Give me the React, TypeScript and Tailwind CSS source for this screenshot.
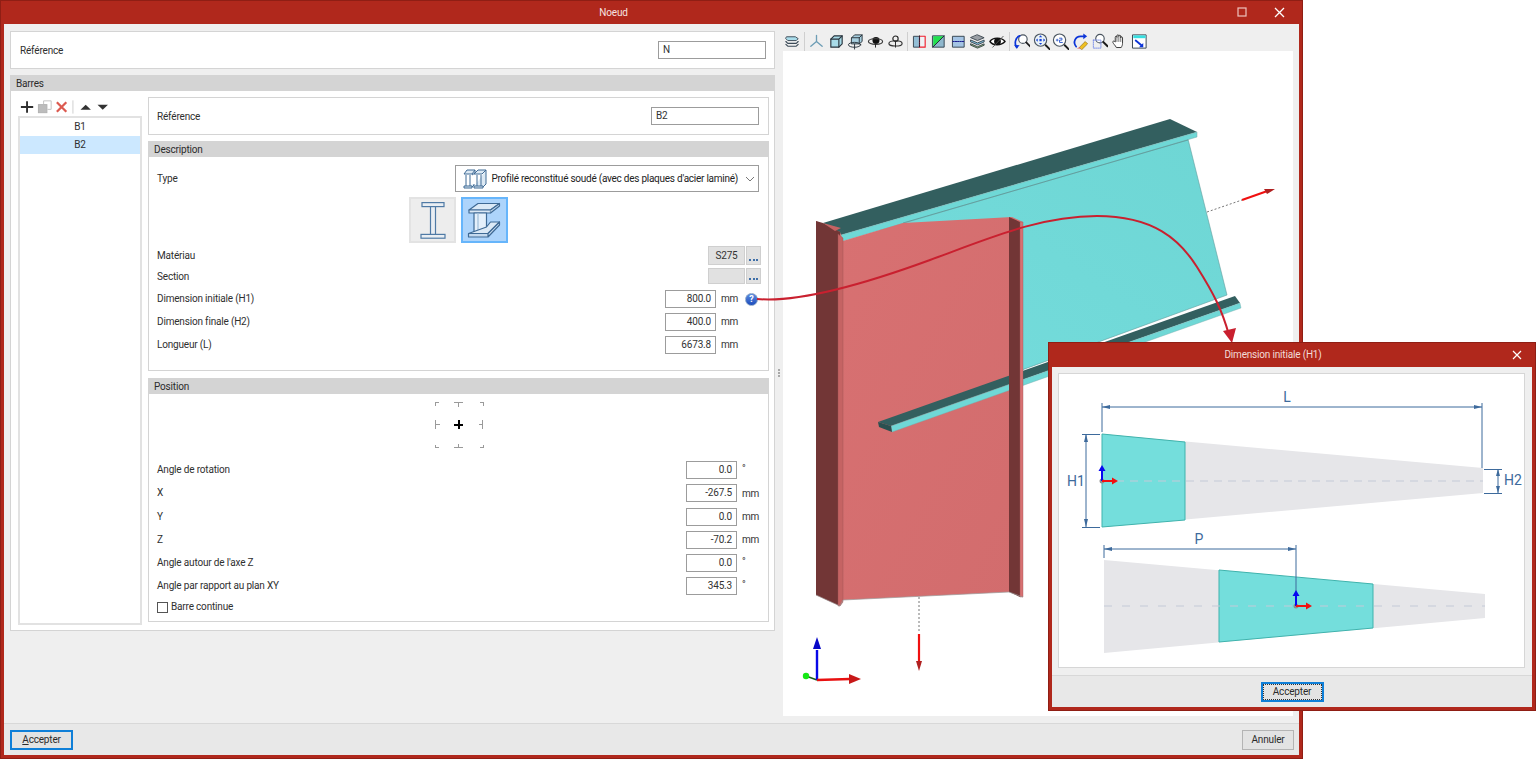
import React from "react";

const lineDark = "#3b4a57";

function Tool({ children }: { children: React.ReactNode }) {
  return (
    <div className="flex h-[18px] w-[19.6px] shrink-0 items-center justify-center">
      <svg width="17" height="17" viewBox="0 0 18 18" fill="none" strokeLinejoin="round" strokeLinecap="round">
        {children}
      </svg>
    </div>
  );
}

function Mag({ x = 7.5, y = 7.5, r = 5.5, fill = "#fff" }: { x?: number; y?: number; r?: number; fill?: string }) {
  return (
    <g>
      <circle cx={x} cy={y} r={r} fill={fill} stroke="#4a5560" strokeWidth="1.2" />
      <path d={`M${x + r - 1} ${y + r - 1}L${x + r + 3.5} ${y + r + 3.5}`} stroke="#1c1c1c" strokeWidth="2" />
    </g>
  );
}

function ViewToolbar() {
  const Sep = () => <div className="mx-[1.7px] h-[19px] w-px shrink-0 bg-[#cfcfcf]" />;
  return (
    <div className="flex h-[27px] items-center pt-[7px]">
      <Tool>
        <path d="M3 4h9l3 2-2 2H4L2 6z" fill="#a9dcea" stroke={lineDark} />
        <path d="M2 9l2 2h9l2-2M2 12l2 2h9l2-2" stroke={lineDark} strokeWidth="1.2" />
      </Tool>
      <Sep />
      <Tool>
        <path d="M9 9V2.500M9 9l-6 5M9 9l6 5" stroke="#6d9db5" strokeWidth="1.4" />
      </Tool>
      <Tool>
        <path d="M3 6.500l3.500-3.500H15v8.500L11.500 15H3z" fill="#a8dbe8" stroke="#28333c" strokeWidth="1.2" />
        <path d="M3 6.500h8.500V15M11.500 6.500L15 3" stroke="#28333c" strokeWidth="1.2" />
      </Tool>
      <Tool>
        <path d="M5 5l3-3h8v7l-3 2.500H5z" fill="#a8cfdf" stroke="#28333c" />
        <path d="M5 5h8v6.500M13 5l3-3" stroke="#28333c" />
        <ellipse cx="8" cy="12.500" rx="6.500" ry="2.600" stroke="#28333c" />
        <path d="M8 12v5" stroke="#28333c" />
      </Tool>
      <Tool>
        <circle cx="9.500" cy="8" r="3.700" fill="#111" />
        <ellipse cx="9" cy="9" rx="7.500" ry="3" stroke="#3a3a3a" strokeWidth="1.2" />
        <path d="M9 12v3" stroke="#222" />
      </Tool>
      <Tool>
        <circle cx="9" cy="6" r="2.800" stroke="#222" strokeWidth="1.2" />
        <ellipse cx="9" cy="11" rx="7" ry="2.800" stroke="#333" strokeWidth="1.2" />
        <path d="M9 9v6" stroke="#222" />
      </Tool>
      <Sep />
      <Tool>
        <rect x="3" y="3.500" width="6" height="11.500" fill="#93bfd6" stroke="#33424e" />
        <rect x="9" y="3.500" width="6" height="11.500" fill="#eef3f6" stroke="#f01f2c" strokeWidth="1.2" />
        <path d="M9 3v12" stroke="#223" strokeDasharray="1.500 1" />
      </Tool>
      <Tool>
        <rect x="3" y="3" width="12" height="12" fill="#8fb7cd" stroke="#33424e" />
        <path d="M3.500 14.500V3.500h11z" fill="#22e04d" />
        <path d="M3 15L15 3" stroke="#223" />
      </Tool>
      <Tool>
        <rect x="3" y="3.500" width="12" height="11.500" fill="#a4c4e4" stroke="#33424e" />
        <path d="M3 9h12" stroke="#14148a" strokeDasharray="1.500 1" />
      </Tool>
      <Tool>
        <path d="M9 2l7 3-7 3-7-3z" fill="#9a9fa5" stroke="#3d4750" />
        <path d="M2 7.500l7 3 7-3v2l-7 3-7-3z" fill="#7fc0de" stroke="#3d4750" />
        <path d="M2 11.500l7 3 7-3v1.500l-7 3-7-3z" fill="#8fbf6a" stroke="#3d4750" />
      </Tool>
      <Tool>
        <path d="M1 9c3-4.500 12-5 16 0-4 4.500-13 4.500-16 0z" fill="#fff" stroke="#111" strokeWidth="1.500" />
        <circle cx="9" cy="9" r="3.600" fill="#111" />
        <path d="M4 15L15 3.500" stroke="#555" />
      </Tool>
      <Sep />
      <Tool>
        <Mag x={10.5} y={6.5} r={4.5} />
        <path d="M4 15.500C1 11 2.500 5 7 3" stroke="#0c35d8" strokeWidth="1.800" />
        <path d="M1 12.500l3 4 3-3.500z" fill="#0c35d8" />
      </Tool>
      <Tool>
        <Mag x={8} y={7.5} r={6.5} fill="#eaf2f8" />
        <path d="M8 2.500l-1.700 2h3.400zM8 12.500l-1.700-2h3.400zM3 7.500l2-1.700v3.400zM13 7.500l-2-1.700v3.400z" fill="#1745d8" />
        <rect x="6.800" y="6.300" width="2.400" height="2.400" fill="#1745d8" />
      </Tool>
      <Tool>
        <Mag x={8} y={7.5} r={6.5} />
        <path d="M4.500 7.500h2M5.500 6.500v2" stroke="#2a55c8" strokeWidth="0.900" />
        <path d="M8 5.500h2.500v2H8v2.500h3" stroke="#2a55c8" strokeWidth="1" />
      </Tool>
      <Tool>
        <path d="M4.500 14.500C.5 10 3.500 3.500 9 3.500h4" stroke="#0c35d8" strokeWidth="1.800" />
        <path d="M12 .5l4 3-4 3z" fill="#0c35d8" />
        <path d="M8 15l6-6 2.500 2.500-6 6z" fill="#f0c020" stroke="#8a6a10" strokeWidth="0.700" />
        <path d="M5 16.500l3-1.500 1.500 1.500z" fill="#d55" />
      </Tool>
      <Tool>
        <Mag x={9.5} y={6} r={4.5} />
        <rect x="2.500" y="7.500" width="8" height="8.500" stroke="#7b8fe8" strokeDasharray="1.300 1" />
      </Tool>
      <Tool>
        <path
          d="M5.500 15c-1-2-3-3.500-3.500-5s1-2 2.500-.5V4.500c0-1.500 1.800-1.500 1.800 0V3c0-1.500 2-1.500 2 0v.5c0-1.500 2-1.500 2 0V5c0-1.300 1.900-1.300 1.900 0v6c0 2-.7 3-1.200 4z"
          fill="#fff"
          stroke="#333"
          strokeWidth="1"
        />
        <path d="M6.300 4.500V9M8.300 3.500V9M10.300 3.500V9" stroke="#333" strokeWidth="0.700" />
      </Tool>
      <Tool>
        <rect x="2" y="2" width="14" height="14" fill="#fff" stroke="#33424e" />
        <rect x="2.500" y="2.500" width="13" height="3" fill="#37dfe0" />
        <path d="M5 8l6 5" stroke="#0c35d8" strokeWidth="2" />
        <path d="M13 15H8.500L13 10.500z" fill="#0c35d8" />
      </Tool>
    </div>
  );
}

function GroupHeader({ title }: { title: string }) {
  return <div className="flex h-[15px] shrink-0 items-center bg-[#d4d4d4] pl-[5px] leading-none text-[#2b2b2b]">{title}</div>;
}

function Input({ value, align = "right", w = "w-[51px]" }: { value: string; align?: "left" | "right"; w?: string }) {
  return (
    <div
      className={`flex h-[18px] shrink-0 items-center border border-[#9c9c9c] bg-white px-[4px] leading-none text-[#333] ${w} ${
        align === "right" ? "justify-end" : "justify-start"
      }`}
    >
      {value}
    </div>
  );
}

function Dots() {
  return (
    <div className="flex h-full w-[15px] shrink-0 items-end justify-center gap-[1.5px] border border-[#cfcfcf] bg-[#e1e1e1] pb-[3px]">
      <span className="h-[2px] w-[2px] bg-[#3f6fa8]" />
      <span className="h-[2px] w-[2px] bg-[#3f6fa8]" />
      <span className="h-[2px] w-[2px] bg-[#3f6fa8]" />
    </div>
  );
}

function DimRow({ label, value, help }: { label: string; value: string; help?: boolean }) {
  return (
    <div className="flex h-[18px] items-center">
      <span className="flex-1">{label}</span>
      <Input value={value} />
      <span className="flex w-[45px] shrink-0 items-center pl-[5px] text-[#333]">
        <span className="w-[24px]">mm</span>
        {help && (
          <span className="flex h-[13px] w-[13px] items-center justify-center rounded-full border border-[#8aa5c8] bg-linear-to-b from-[#5c8be0] to-[#1d4cbc] text-[9px] font-bold leading-none text-white">
            ?
          </span>
        )}
      </span>
    </div>
  );
}

function PosRow({ label, value, unit }: { label: string; value: string; unit: string }) {
  return (
    <div className="flex h-[18px] items-center">
      <span className="flex-1">{label}</span>
      <Input value={value} />
      <span className={`w-[24px] shrink-0 pl-[5px] text-[#333] ${unit === "°" ? "-mt-[3px]" : "mt-[1px]"}`}>{unit}</span>
    </div>
  );
}

function TypeIcon() {
  return (
    <svg className="shrink-0" width="26" height="24" viewBox="0 0 26 24" fill="none" stroke="#3f6a95" strokeWidth="1" strokeLinejoin="round">
      <path d="M2 7h8l3-4H5zM4 8v11M8 8v11M2 20h8l2-2v-1M13 3v3l-3 2" fill="#dce9f4" />
      <path d="M12 7h8l4-4h-8zM15 8v11M19 8v11M12 20h9l3-3V3" fill="#dce9f4" />
      <path d="M2 19h8v2H2zM12 19h9v2h-9z" fill="#dce9f4" />
    </svg>
  );
}

function IProfile() {
  return (
    <svg width="26" height="37" viewBox="0 0 26 37" fill="#e9eef3" stroke="#4f7aa5" strokeWidth="1.2">
      <rect x="2" y="0.600" width="22" height="4" />
      <rect x="1" y="32.400" width="24" height="3.800" />
      <rect x="10.500" y="4.600" width="5" height="27.800" />
    </svg>
  );
}

function IProfile3D() {
  return (
    <svg width="43" height="42" viewBox="2 2 43 42" fill="none" stroke="#3f6a95" strokeWidth="1.2" strokeLinejoin="round">
      <path d="M8 13L17 6.500H38.500L29.500 13z" fill="#dbe9f6" />
      <path d="M8 13H29.500V16H8z" fill="#dbe9f6" />
      <path d="M29.500 13L38.500 6.500V9L29.500 16" fill="#c4d9ee" />
      <path d="M13 16H25.500V36.500H13z" fill="#e4f0fb" />
      <path d="M17 16V34" stroke="#9fbcd8" />
      <path d="M25.500 30L29.500 25H38.500L27 36.500H7.500z" fill="#dbe9f6" />
      <path d="M7.500 36.500H27V40H7.500zM27 36.500L38.500 25V28L27 40" fill="#c4d9ee" />
    </svg>
  );
}

function AlignGrid() {
  return (
    <svg width="50" height="50" viewBox="434 400 50 50" fill="none" stroke="#9a9a9a" strokeWidth="1" shapeRendering="crispEdges">
      <path d="M438.500 402.500h-3v3M480 402.500h3v3M438.500 447.500h-3v-3M480 447.500h3v-3" />
      <path d="M454 402.500h9M458.500 402.500v4M454 447.500h9M458.500 447.500v-4" />
      <path d="M435.500 420v9M435.500 424.500h4M482.500 420v9M482.500 424.500h-4" />
      <path d="M454 424.500h9M458.500 420v9" stroke="#000" strokeWidth="2" />
    </svg>
  );
}

function BeamScene() {
  return (
    <svg className="block" width="510" height="665" viewBox="783 51 510 665" fill="none">
      <defs>
        <linearGradient id="cy" x1="0" y1="1" x2="1" y2="0">
          <stop offset="0" stopColor="#74dcdc" />
          <stop offset="1" stopColor="#6ed6d4" />
        </linearGradient>
        <linearGradient id="rd" x1="0" y1="0" x2="1" y2="1">
          <stop offset="0" stopColor="#d87172" />
          <stop offset="1" stopColor="#d26c6d" />
        </linearGradient>
      </defs>
      <path d="M880 229L1188 139L1227 295L1000 378z" fill="url(#cy)" stroke="#5f9c9c" strokeWidth="0.6" />
      <path d="M823 223L1170 119L1197 132L841 235z" fill="#335f5f" />
      <path d="M841 235L1197 132L1197 137L843 241z" fill="#6fd8d6" stroke="#78a8a8" strokeWidth="0.5" />
      <path d="M903 223L1188 140" stroke="#5c9090" strokeWidth="0.7" />
      <path d="M1207 212L1242 200" stroke="#777" strokeDasharray="2 2" />
      <path d="M1242 200L1266 191.500" stroke="#f01010" strokeWidth="2.200" />
      <path d="M1264 189L1275 189L1267 194z" fill="#b02020" />
      <path d="M816 221L840 232L843 241L903 223L1012 217L1023 222V596L1009 592L843 600L840 606L816 595z" fill="url(#rd)" />
      <path d="M816 221L823 223L840 232V606L816 595z" fill="#723636" />
      <path d="M838 234L843 238V602L840 606H838z" fill="#c56363" stroke="#9a5050" strokeWidth="0.4" />
      <path d="M823 223L841 228L835 231z" fill="#c56363" />
      <path d="M878 422L1235 296L1240 303L891 426z" fill="#335f5f" />
      <path d="M891 426L1240 303L1241 308L892 432z" fill="#6fd8d6" stroke="#7aa8a8" strokeWidth="0.4" />
      <path d="M878 422L891 426L892 432L879 427z" fill="#2b5050" />
      <path d="M1009 217L1020 222V597L1009 592z" fill="#723636" />
      <path d="M1020 222L1023 222V597L1020 597z" fill="#d87172" stroke="#a05555" strokeWidth="0.4" />
      <path d="M816 595L840 606L843 600L1009 592L1023 597" stroke="#9a9a9a" strokeWidth="0.7" />
      <path d="M919 597V633" stroke="#777" strokeDasharray="2 2" />
      <path d="M919 634V663" stroke="#f01010" strokeWidth="2.200" />
      <path d="M916 661H922L919 671z" fill="#b02020" />
      <path d="M817 680L806 676" stroke="#186018" strokeWidth="1.500" />
      <circle cx="806" cy="676" r="3.200" fill="#16e816" />
      <path d="M817 680V650" stroke="#0808e8" strokeWidth="2.400" />
      <path d="M813 649L817 637L821 649z" fill="#0808c8" />
      <path d="M817 680L850 679" stroke="#e81010" strokeWidth="2.400" />
      <path d="M849 674L861 679L849 684z" fill="#c81818" />
    </svg>
  );
}

function Curve() {
  return (
    <svg className="pointer-events-none absolute left-0 top-0" width="1536" height="759" viewBox="0 0 1536 759" fill="none">
      <path
        d="M757 299C800 303 870 282 930 260S1040 216 1097 216S1180 240 1197 267S1222 310 1229 335"
        stroke="#c9202f"
        strokeWidth="2"
      />
      <path d="M1232 343L1223 331L1236 328z" fill="#c9202f" />
    </svg>
  );
}

function DiagramArrows({ x, y }: { x: number; y: number }) {
  return (
    <g>
      <circle cx={x} cy={y} r="2.500" fill="#8d8d8d" />
      <path d={`M${x} ${y}V${y - 12}`} stroke="#0808f0" strokeWidth="2" />
      <path d={`M${x - 3.5} ${y - 10}L${x} ${y - 16}L${x + 3.5} ${y - 10}z`} fill="#0808f0" />
      <path d={`M${x} ${y}H${x + 12}`} stroke="#f01010" strokeWidth="2" />
      <path d={`M${x + 10} ${y - 3.5}L${x + 16} ${y}L${x + 10} ${y + 3.5}z`} fill="#f01010" />
    </g>
  );
}

function Diagram() {
  const blue = "#3d6a9c";
  const dim = { fontFamily: "Roboto, sans-serif", fontSize: 14, fill: "#3d6a9c", letterSpacing: 0 };
  return (
    <svg className="block" width="465" height="293" viewBox="1059 374 465 293" fill="none">
      <path d="M1102 434L1483 468V493L1102 527z" fill="#e6e6e9" />
      <path d="M1102 434L1185 442V520L1102 527z" fill="#74dedc" stroke="#3fb3ad" />
      <path d="M1102 481H1483" stroke="#c3cad8" strokeWidth="1.200" strokeDasharray="8 6" />
      <path d="M1104 560L1485 594V618L1104 653z" fill="#e6e6e9" />
      <path d="M1219 570L1373 584V628L1219 642z" fill="#74dedc" stroke="#3fb3ad" />
      <path d="M1104 606H1485" stroke="#c3cad8" strokeWidth="1.200" strokeDasharray="8 10" />
      <path d="M1102 403V432M1482 403V468M1102 407H1482" stroke={blue} strokeWidth="1" />
      <path d="M1102 407l8-2v4zM1482 407l-8-2v4z" fill={blue} />
      <text x="1287" y="402" textAnchor="middle" style={dim}>L</text>
      <path d="M1082 434.500H1100M1082 527.500H1100M1086 434V527" stroke={blue} strokeWidth="1" />
      <path d="M1086 434l-2 8h4zM1086 527l-2-8h4z" fill={blue} />
      <text x="1067" y="486" style={dim}>H1</text>
      <path d="M1484 469.500H1502M1484 493.500H1502M1498 469V493" stroke={blue} strokeWidth="1" />
      <path d="M1498 469l-2 7h4zM1498 493l-2-7h4z" fill={blue} />
      <text x="1504" y="485" style={dim}>H2</text>
      <path d="M1104 545V558M1296 545V600M1104 549H1296" stroke={blue} strokeWidth="1" />
      <path d="M1104 549l8-2v4zM1296 549l-8-2v4z" fill={blue} />
      <text x="1199" y="544" textAnchor="middle" style={dim}>P</text>
      <DiagramArrows x={1102} y={481} />
      <DiagramArrows x={1296} y={606} />
    </svg>
  );
}

function FooterButton({ children, focus, dotted }: { children: React.ReactNode; focus?: boolean; dotted?: boolean }) {
  return (
    <div
      className={`flex h-[20px] items-center justify-center bg-[#e3e3e3] leading-none text-[#2b2b2b] ${
        focus ? "border-2 border-[#0f7fd8]" : "border border-[#b4b4b4]"
      } ${dotted ? "outline-1 -outline-offset-3 outline-dotted outline-[#333]" : ""}`}
    >
      {children}
    </div>
  );
}

function Dialog() {
  return (
    <div className="absolute left-[1048px] top-[342px] flex h-[369px] w-[488px] flex-col border border-[#8f1e14] bg-[#b0281c] px-[3px] pb-[3px]">
      <div className="relative flex h-[24px] shrink-0 items-center justify-center pr-[38px] text-[#f3dcd8]">
        <span>Dimension initiale (H1)</span>
        <svg className="absolute right-[10px] top-[7px]" width="10" height="10" viewBox="0 0 10 10" stroke="#fff" strokeWidth="1.200">
          <path d="M1 1l8 8M9 1l-8 8" />
        </svg>
      </div>
      <div className="flex min-h-0 flex-1 flex-col bg-[#efefef]">
        <div className="flex-1 px-[6px] pt-[6px]">
          <div className="h-[295px] w-[467px] border border-[#d6d6d6] bg-white">
            <Diagram />
          </div>
        </div>
        <div className="flex h-[32px] shrink-0 items-center justify-center border-t border-[#d8d8d8] bg-[#e8e8e8]">
          <div className="w-[63px]">
            <FooterButton focus dotted>Accepter</FooterButton>
          </div>
        </div>
      </div>
    </div>
  );
}

function MainWindow() {
  return (
    <div className="flex h-[759px] w-[1303px] flex-col border border-[#8f1e14] bg-[#b0281c] px-[3px] pb-[3px]">
      <div className="relative flex h-[23px] shrink-0 items-center justify-center pr-[76px] text-[#f6e3e0]">
        <span>Noeud</span>
        <svg className="absolute left-[1233px] top-[6px]" width="10" height="10" viewBox="0 0 10 10" fill="none" stroke="#eec4bf" strokeWidth="1.200">
          <rect x="1" y="1" width="8" height="8" />
        </svg>
        <svg className="absolute left-[1270px] top-[6px]" width="11" height="11" viewBox="0 0 11 11" stroke="#fff" strokeWidth="1.300">
          <path d="M1 1l9 9M10 1l-9 9" />
        </svg>
      </div>
      <div className="flex min-h-0 flex-1 flex-col bg-[#efefef]">
        <div className="flex min-h-0 flex-1">
          <div className="flex w-[771px] shrink-0 flex-col gap-[6px] pl-[6px] pt-[7px]">
            <div className="flex h-[38px] items-center justify-between border border-[#d4d4d4] bg-white pl-[9px] pr-[8px]">
              <span className="pt-[1px]">Référence</span>
              <Input value="N" align="left" w="w-[108px]" />
            </div>
            <div className="flex h-[556px] flex-col border border-[#d4d4d4] bg-white">
              <GroupHeader title="Barres" />
              <div className="flex min-h-0 flex-1 gap-[6px] pb-[5px] pl-[7px] pr-[5px] pt-[6px]">
                <div className="flex w-[124px] shrink-0 flex-col">
                  <div className="flex h-[19px] shrink-0 items-center pl-[1px]">
                    <svg width="130" height="16" viewBox="0 0 130 16" fill="none">
                      <path d="M2 8h13M8.500 2v12" stroke="#2f2f2f" strokeWidth="2" />
                      <rect x="20.500" y="5.500" width="9" height="8.500" fill="#bcbcbc" stroke="#b0b0b0" />
                      <path d="M26 5V1.500h8v9h-4" stroke="#c2c2c2" />
                      <path d="M40 3l10 10M50 3L40 13" stroke="#dc5a50" strokeWidth="2.400" />
                      <path d="M57 1v14" stroke="#cdcdcd" />
                      <path d="M65 11l5.500-5.500 5.500 5.500z" fill="#333" />
                      <path d="M83 5.500l5.500 5.500 5.500-5.500z" fill="#333" />
                    </svg>
                  </div>
                  <div className="min-h-0 flex-1 border-2 border-[#e2e2e2] bg-white">
                    <div className="flex h-[18px] items-center justify-center leading-none">B1</div>
                    <div className="flex h-[18px] items-center justify-center bg-[#cce8ff] leading-none">B2</div>
                  </div>
                </div>
                <div className="flex min-w-0 flex-1 flex-col">
                  <div className="flex h-[38px] shrink-0 items-center justify-between border border-[#d4d4d4] bg-white pl-[8px] pr-[9px]">
                    <span className="pt-[1px]">Référence</span>
                    <Input value="B2" align="left" w="w-[108px]" />
                  </div>
                  <div className="mt-[6px] flex h-[230px] shrink-0 flex-col border border-[#d4d4d4] bg-white">
                    <GroupHeader title="Description" />
                    <div className="flex flex-col pl-[8px] pr-[7px] pt-[8px]">
                      <div className="flex h-[27px] items-center justify-between pr-[2.500px]">
                        <span className="pt-[1px]">Type</span>
                        <div className="flex h-[27px] w-[304px] shrink-0 items-center border border-[#9c9c9c] pl-[6px] pr-[3px] text-[#222]">
                          <TypeIcon />
                          <span className="ml-[4px] flex-1 whitespace-nowrap tracking-[-0.25px]">Profilé reconstitué soudé (avec des plaques d'acier laminé)</span>
                          <svg className="shrink-0" width="10" height="6" viewBox="0 0 10 6" fill="none" stroke="#777" strokeWidth="1">
                            <path d="M1 1l4 4 4-4" />
                          </svg>
                        </div>
                      </div>
                      <div className="mt-[5px] flex h-[46px] justify-center gap-[5px] pr-[1px]">
                        <div className="flex h-[46px] w-[47px] items-center justify-center border-2 border-[#e3e3e3] bg-[#ededed]">
                          <IProfile />
                        </div>
                        <div className="flex h-[46px] w-[47px] items-center justify-center border-2 border-[#66b5fb] bg-[#add4fb]">
                          <IProfile3D />
                        </div>
                      </div>
                      <div className="mt-[3px] flex h-[19px] items-center">
                        <span className="flex-1">Matériau</span>
                        <div className="flex h-full w-[37px] items-center justify-center border border-[#cfcfcf] bg-[#e1e1e1] leading-none text-[#333]">S275</div>
                        <div className="ml-[1px] h-full">
                          <Dots />
                        </div>
                      </div>
                      <div className="mt-[3px] flex h-[16px] items-center">
                        <span className="flex-1 pt-[1px]">Section</span>
                        <div className="h-full w-[37px] border border-[#cfcfcf] bg-[#e1e1e1]" />
                        <div className="ml-[1px] h-full">
                          <Dots />
                        </div>
                      </div>
                      <div className="mt-[6px] flex flex-col gap-[5px]">
                        <DimRow label="Dimension initiale (H1)" value="800.0" help />
                        <DimRow label="Dimension finale (H2)" value="400.0" />
                        <DimRow label="Longueur (L)" value="6673.8" />
                      </div>
                    </div>
                  </div>
                  <div className="mt-[7px] flex h-[244px] shrink-0 flex-col border border-[#d4d4d4] bg-white">
                    <GroupHeader title="Position" />
                    <div className="flex flex-col pl-[8px] pr-[7px] pt-[6px]">
                      <div className="flex justify-center pr-[1px]">
                        <AlignGrid />
                      </div>
                      <div className="mt-[11px] flex flex-col gap-[5.3px]">
                        <PosRow label="Angle de rotation" value="0.0" unit="°" />
                        <PosRow label="X" value="-267.5" unit="mm" />
                        <PosRow label="Y" value="0.0" unit="mm" />
                        <PosRow label="Z" value="-70.2" unit="mm" />
                        <PosRow label="Angle autour de l'axe Z" value="0.0" unit="°" />
                        <PosRow label="Angle par rapport au plan XY" value="345.3" unit="°" />
                      </div>
                      <div className="mt-[6px] flex h-[12px] items-center gap-[3px]">
                        <span className="h-[11px] w-[11px] border border-[#555] bg-white" />
                        <span>Barre continue</span>
                      </div>
                    </div>
                  </div>
                </div>
              </div>
            </div>
          </div>
          <div className="flex w-[8px] shrink-0 flex-col items-center justify-center gap-[1px] pb-[2px] pt-[1px]">
            <span className="h-[2px] w-[1.5px] bg-[#a9a9a9]" />
            <span className="h-[2px] w-[1.5px] bg-[#a9a9a9]" />
            <span className="h-[2px] w-[1.5px] bg-[#a9a9a9]" />
          </div>
          <div className="flex min-w-0 flex-1 flex-col pr-[6px]">
            <ViewToolbar />
            <div className="h-[665px] bg-white">
              <BeamScene />
            </div>
          </div>
        </div>
        <div className="flex h-[32px] shrink-0 items-center justify-between border-t border-[#d8d8d8] bg-[#e8e8e8] pl-[6px] pr-[5px]">
          <div className="w-[63px]">
            <FooterButton focus>
              <span>
                <span className="underline">A</span>ccepter
              </span>
            </FooterButton>
          </div>
          <div className="w-[52px]">
            <FooterButton>Annuler</FooterButton>
          </div>
        </div>
      </div>
    </div>
  );
}

export default function App() {
  return (
    <div className="relative h-[759px] w-[1536px] overflow-hidden bg-white text-[10px] leading-[14px] tracking-[-0.18px] text-[#2f2f2f] [font-family:Roboto,sans-serif]">
      <MainWindow />
      <Curve />
      <Dialog />
    </div>
  );
}
